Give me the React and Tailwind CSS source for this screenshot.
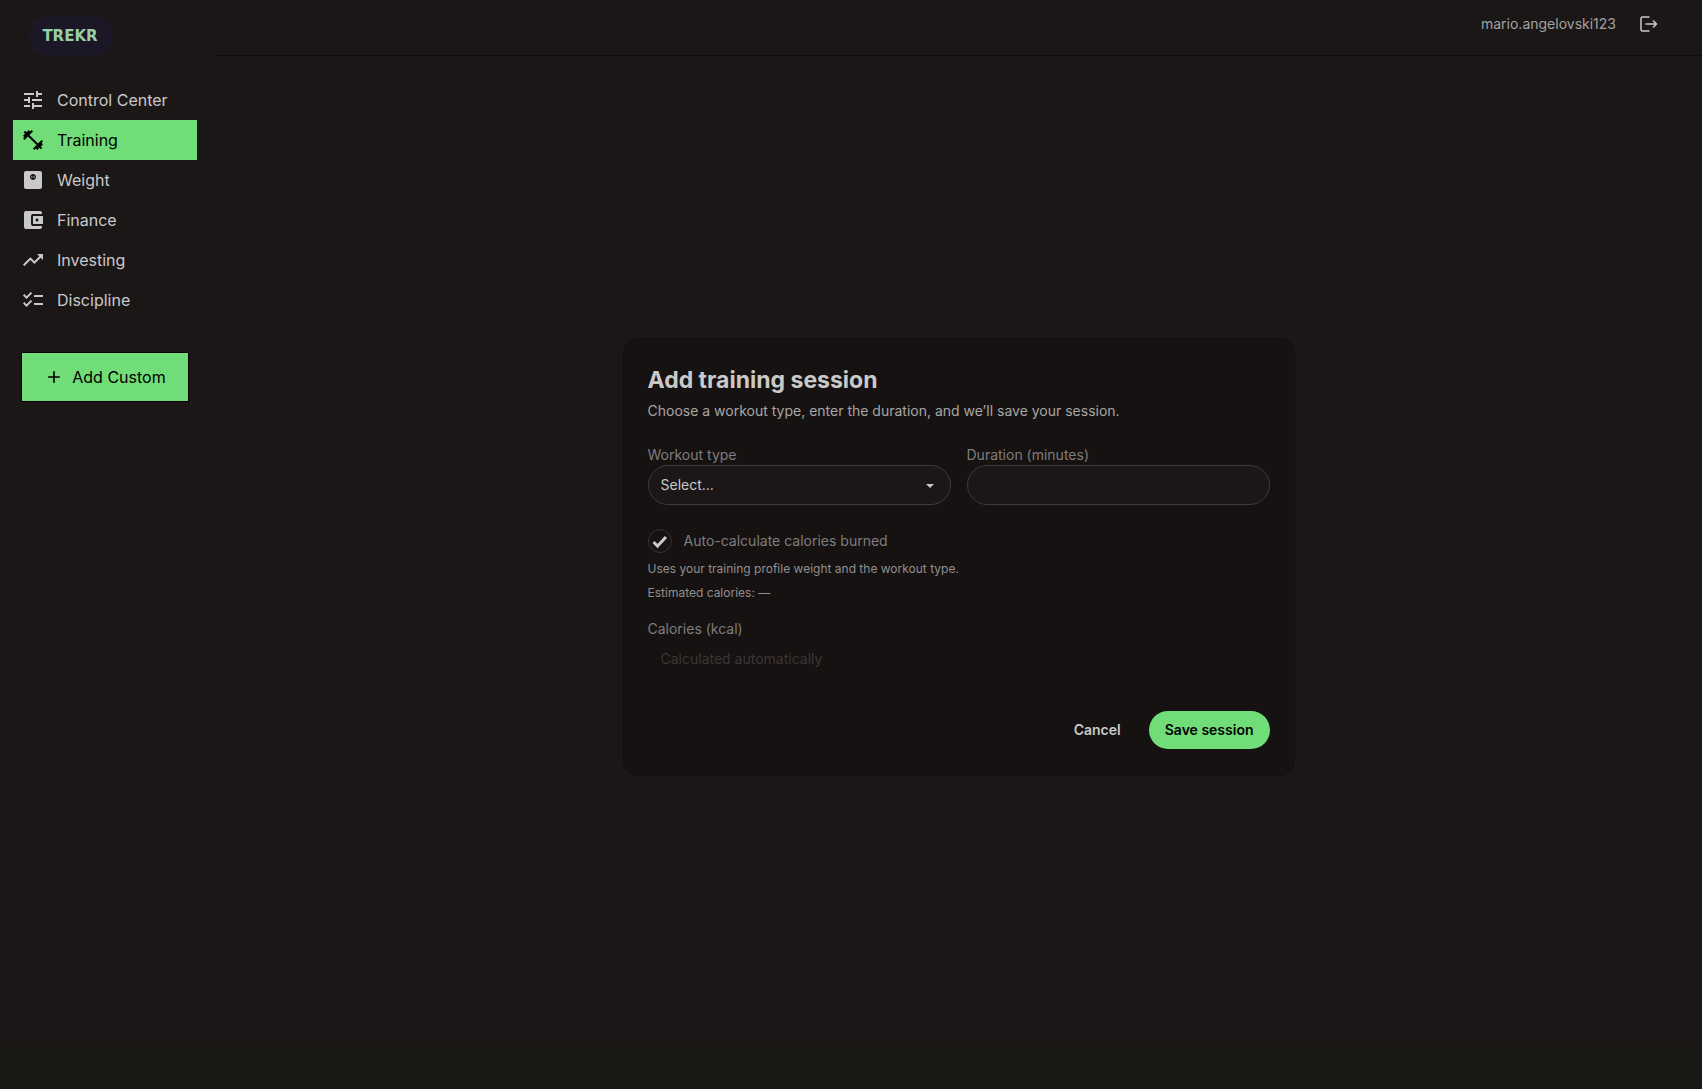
import { useState } from "react";
import {
  MdTune,
  MdFitnessCenter,
  MdMonitorWeight,
  MdAccountBalanceWallet,
  MdTrendingUp,
  MdChecklist,
  MdAdd,
} from "react-icons/md";

const navItems = [
  { label: "Control Center", icon: MdTune },
  { label: "Training", icon: MdFitnessCenter },
  { label: "Weight", icon: MdMonitorWeight },
  { label: "Finance", icon: MdAccountBalanceWallet },
  { label: "Investing", icon: MdTrendingUp },
  { label: "Discipline", icon: MdChecklist },
];

export default function App() {
  const [active, setActive] = useState("Training");

  return (
    <div className="flex min-h-screen bg-[linear-gradient(to_top,#1a1916_47px,#1b1716_47px)] font-['Inter',sans-serif] text-[#cac9c9]">
      <Sidebar active={active} onSelect={setActive} />

      <div className="flex flex-1 flex-col">
        <Topbar />
        <main className="flex flex-1 items-center justify-center pb-8 pl-0.5">
          <TrainingForm />
        </main>
      </div>
    </div>
  );
}

function Sidebar({ active, onSelect }) {
  return (
    <aside className="w-[213px] shrink-0 px-[13px] pt-4">
      {/* Logo */}
      <a
        href="#"
        className="ml-4 flex h-10 w-[82px] items-center justify-center rounded-2xl bg-[#1b1726] font-['DejaVu_Sans',sans-serif] text-[15px] font-bold text-[#97cea6]"
      >
        TREKR
      </a>

      <nav className="mt-6">
        {navItems.map(({ label, icon: Icon }) => (
          <a
            key={label}
            href="#"
            onClick={() => onSelect(label)}
            className={`flex h-10 w-[184px] items-center gap-3 px-2 ${
              active === label ? "bg-[#70dd78] text-black" : ""
            }`}
          >
            <Icon className="size-6" />
            {label}
          </a>
        ))}
      </nav>

      <button
        type="button"
        className="ml-2 mt-8 flex h-[50px] w-[168px] items-center justify-center gap-2 border border-black bg-[#70dd78] text-black"
      >
        <MdAdd className="size-5" />
        Add Custom
      </button>
    </aside>
  );
}

function Topbar() {
  return (
    <header className="flex h-14 items-start justify-end gap-6 border-b border-[#110e0d] pr-11 pt-3">
      <span className="text-sm leading-6 text-[#a3a1a1]">mario.angelovski123</span>
      <button type="button" aria-label="Log out" className="flex h-6 items-center">
        <LogoutIcon />
      </button>
    </header>
  );
}

function TrainingForm() {
  const [auto, setAuto] = useState(true);

  return (
    <form className="w-[672px] rounded-2xl border border-[#110e0d] bg-[#161211] px-6 pb-[26px] pt-6">
      <h1 className="text-[23px]/[34px] font-bold">Add training session</h1>
      <p className="mt-1 text-sm text-[#a8a6a6]">
        Choose a workout type, enter the duration, and we’ll save your session.
      </p>

      <div className="mt-6 grid grid-cols-2 gap-4">
        <div>
          <label htmlFor="type" className="block text-sm text-[#7f7d7d]">
            Workout type
          </label>
          <div className="relative">
            <select
              id="type"
              className="block h-10 w-full appearance-none rounded-full border border-[#3d3a39] bg-[#1b1716] px-3 text-sm"
            >
              <option>Select...</option>
            </select>
            <CaretIcon />
          </div>
        </div>
        <div>
          <label htmlFor="duration" className="block text-sm text-[#7f7d7d]">
            Duration (minutes)
          </label>
          <input
            id="duration"
            type="text"
            inputMode="numeric"
            className="block h-10 w-full rounded-full border border-[#3d3a39] bg-[#1b1716] px-3 text-sm"
          />
        </div>
      </div>

      {/* Auto calories */}
      <label className="mt-6 flex h-6 items-center gap-3 text-sm text-[#7f7d7d]">
        <span className="relative size-6">
          <input
            type="checkbox"
            checked={auto}
            onChange={() => setAuto(!auto)}
            className="block size-6 appearance-none rounded-full border border-[#353231]"
          />
          {auto && <CheckIcon />}
        </span>
        Auto-calculate calories burned
      </label>
      <p className="mt-2 text-xs text-[#918f8f]">
        Uses your training profile weight and the workout type.
      </p>
      <p className="mt-2 text-xs text-[#918f8f]">Estimated calories: —</p>

      <label htmlFor="calories" className="mt-[18px] block text-sm text-[#7f7d7d]">
        Calories (kcal)
      </label>
      <input
        id="calories"
        type="text"
        disabled={auto}
        placeholder="Calculated automatically"
        className="block h-10 w-full rounded-full border border-transparent px-3 text-sm placeholder:text-[#3a3736]"
      />

      <div className="mt-8 flex justify-end gap-3">
        <button type="button" className="h-[38px] px-4 text-sm font-semibold">
          Cancel
        </button>
        <button
          type="submit"
          className="h-[38px] rounded-full bg-[#70dd78] px-4 text-sm font-semibold text-black"
        >
          Save session
        </button>
      </div>
    </form>
  );
}

function LogoutIcon() {
  return (
    <svg viewBox="0 0 18 16" className="h-4 w-[18px]" fill="none" stroke="currentColor" strokeWidth="1.5">
      <path d="M9.5 1H2.5Q1 1 1 2.5v11Q1 15 2.5 15H9.5" />
      <path d="M5.5 8h11M13 4.5 16.5 8 13 11.5" />
    </svg>
  );
}

function CaretIcon() {
  return (
    <svg viewBox="0 0 8 4" className="pointer-events-none absolute right-[17px] top-[19px] h-1 w-2" fill="currentColor">
      <path d="M0 0h8L4 4z" />
    </svg>
  );
}

function CheckIcon() {
  return (
    <svg
      viewBox="0 0 24 24"
      className="pointer-events-none absolute inset-0 size-6 text-[#cac9c9]"
      fill="none"
      stroke="currentColor"
      strokeWidth="3"
    >
      <path d="M5.5 13l4 4 8.5-9" />
    </svg>
  );
}
